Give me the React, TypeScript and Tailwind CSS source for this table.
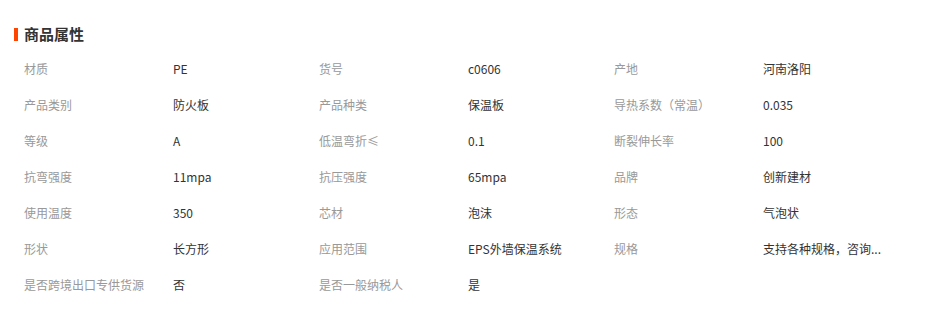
import React from "react";

const items: [string, string][] = [
  ["材质", "PE"],
  ["货号", "c0606"],
  ["产地", "河南洛阳"],
  ["产品类别", "防火板"],
  ["产品种类", "保温板"],
  ["导热系数（常温）", "0.035"],
  ["等级", "A"],
  ["低温弯折≤", "0.1"],
  ["断裂伸长率", "100"],
  ["抗弯强度", "11mpa"],
  ["抗压强度", "65mpa"],
  ["品牌", "创新建材"],
  ["使用温度", "350"],
  ["芯材", "泡沫"],
  ["形态", "气泡状"],
  ["形状", "长方形"],
  ["应用范围", "EPS外墙保温系统"],
  ["规格", "支持各种规格，咨询..."],
  ["是否跨境出口专供货源", "否"],
  ["是否一般纳税人", "是"],
];

export default function App() {
  return (
    <div
      className="w-[942px] h-[312px] bg-white"
      style={{ fontFamily: '"Microsoft YaHei", "Noto Sans CJK SC", sans-serif' }}
    >
      <div className="flex items-center h-[18px] pt-[25px] box-content pl-[14px]">
        <div className="w-[4px] h-[13px] bg-[#ff4400]" />
        <div className="ml-[6px] text-[15px] font-bold text-[#333] leading-[18px]">商品属性</div>
      </div>
      <div className="grid grid-cols-[295px_295px_295px] pl-[24px] mt-[8px]">
        {items.map(([k, v], i) => (
          <div key={i} className="flex items-center h-[36px] text-[12px]">
            <div className="w-[149px] shrink-0 text-[#999] whitespace-nowrap">{k}</div>
            <div className="w-[140px] text-[#333] whitespace-nowrap">{v}</div>
          </div>
        ))}
      </div>
    </div>
  );
}
